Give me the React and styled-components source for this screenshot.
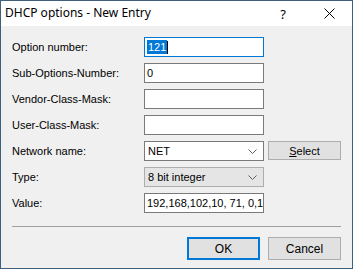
import React from "react";
import styled, { createGlobalStyle } from "styled-components";

const Global = createGlobalStyle`
  html, body { margin: 0; padding: 0; background: #fff; }
  body { font-family: "Liberation Sans", Arial, sans-serif; }
  * { box-sizing: border-box; }
`;

const Window = styled.div`
  width: 353px;
  height: 269px;
  border: 1px solid #3e5f7e;
  background: #f0f0f0;
  display: flex;
  flex-direction: column;
  overflow: hidden;
`;

const TitleBar = styled.div`
  height: 25px;
  background: #ffffff;
  display: flex;
  align-items: center;
  padding-left: 4px;
  flex-shrink: 0;
`;

const Title = styled.div`
  flex: 1;
  font-family: "Noto Sans", "Open Sans", sans-serif;
  font-size: 12px;
  color: #000;
  padding-bottom: 2px;
`;

const TitleBtn = styled.div`
  width: ${(p) => p.$w}px;
  height: 25px;
  display: flex;
  align-items: center;
  justify-content: center;
  font-family: "Noto Sans", sans-serif;
  font-size: 13px;
  color: #000;
`;

const Body = styled.div`
  flex: 1;
  padding: 11px 11px 0 11px;
  display: flex;
  flex-direction: column;
`;

const Form = styled.div`
  display: grid;
  grid-template-columns: 128px 120px 73px;
  column-gap: 4px;
  row-gap: 6px;
  grid-auto-rows: 20px;
`;

const Label = styled.div`
  font-size: 11px;
  color: #000;
  display: flex;
  align-items: center;
  grid-column: 1;
`;

const TextBox = styled.div`
  grid-column: 2;
  height: 20px;
  background: #fff;
  border: 1px solid ${(p) => (p.$focus ? "#0078d7" : "#7a7a7a")};
  font-size: 11px;
  color: #000;
  display: flex;
  align-items: center;
  padding-left: 2px;
  white-space: nowrap;
  overflow: hidden;
`;

const Sel = styled.span`
  background: #0078d7;
  color: #fff;
  padding: 1px 1px;
`;

const Caret = styled.span`
  display: inline-block;
  width: 1px;
  height: 13px;
  background: #000;
`;

const Combo = styled.div`
  grid-column: 2;
  height: 20px;
  background: ${(p) => (p.$flat ? "#e5e5e5" : "#fff")};
  border: 1px solid ${(p) => (p.$flat ? "#adadad" : "#7a7a7a")};
  font-size: 11px;
  color: #000;
  display: flex;
  align-items: center;
  justify-content: space-between;
  padding: 0 6px 0 3px;
`;

const SideButton = styled.div`
  grid-column: 3;
  height: 19px;
  background: #e1e1e1;
  border: 1px solid #adadad;
  font-size: 11px;
  color: #000;
  display: flex;
  align-items: center;
  justify-content: center;
`;

const Sep = styled.div`
  height: 1px;
  background: #a0a0a0;
  margin-top: 13px;
  width: 329px;
`;

const Buttons = styled.div`
  display: flex;
  justify-content: flex-end;
  gap: 8px;
  margin-top: 10px;
  width: 329px;
`;

const Button = styled.div`
  width: 73px;
  height: 23px;
  background: #e1e1e1;
  border: ${(p) => (p.$default ? "2px solid #0078d7" : "1px solid #adadad")};
  font-size: 12px;
  color: #000;
  display: flex;
  align-items: center;
  justify-content: center;
`;

const Chevron = () => (
  <svg width="9" height="5" viewBox="0 0 9 5">
    <polyline points="0.5,0.5 4.5,4.5 8.5,0.5" fill="none" stroke="#606060" strokeWidth="1" />
  </svg>
);

const CloseIcon = () => (
  <svg width="11" height="11" viewBox="0 0 11 11">
    <path d="M0.5 0.5 L10.5 10.5 M10.5 0.5 L0.5 10.5" stroke="#000" strokeWidth="1" />
  </svg>
);

export default function App() {
  return (
    <>
      <Global />
      <Window>
        <TitleBar>
          <Title>DHCP options - New Entry</Title>
          <TitleBtn $w={46}>?</TitleBtn>
          <TitleBtn $w={46}>
            <CloseIcon />
          </TitleBtn>
        </TitleBar>
        <Body>
          <Form>
            <Label>Option number:</Label>
            <TextBox $focus>
              <Sel>121</Sel>
              <Caret />
            </TextBox>
            <Label>Sub-Options-Number:</Label>
            <TextBox>0</TextBox>
            <Label>Vendor-Class-Mask:</Label>
            <TextBox />
            <Label>User-Class-Mask:</Label>
            <TextBox />
            <Label>Network name:</Label>
            <Combo>
              NET
              <Chevron />
            </Combo>
            <SideButton>
              <u>S</u>elect
            </SideButton>
            <Label>Type:</Label>
            <Combo $flat>
              8 bit integer
              <Chevron />
            </Combo>
            <Label>Value:</Label>
            <TextBox>192,168,102,10, 71, 0,1</TextBox>
          </Form>
          <Sep />
          <Buttons>
            <Button $default>OK</Button>
            <Button>Cancel</Button>
          </Buttons>
        </Body>
      </Window>
    </>
  );
}
